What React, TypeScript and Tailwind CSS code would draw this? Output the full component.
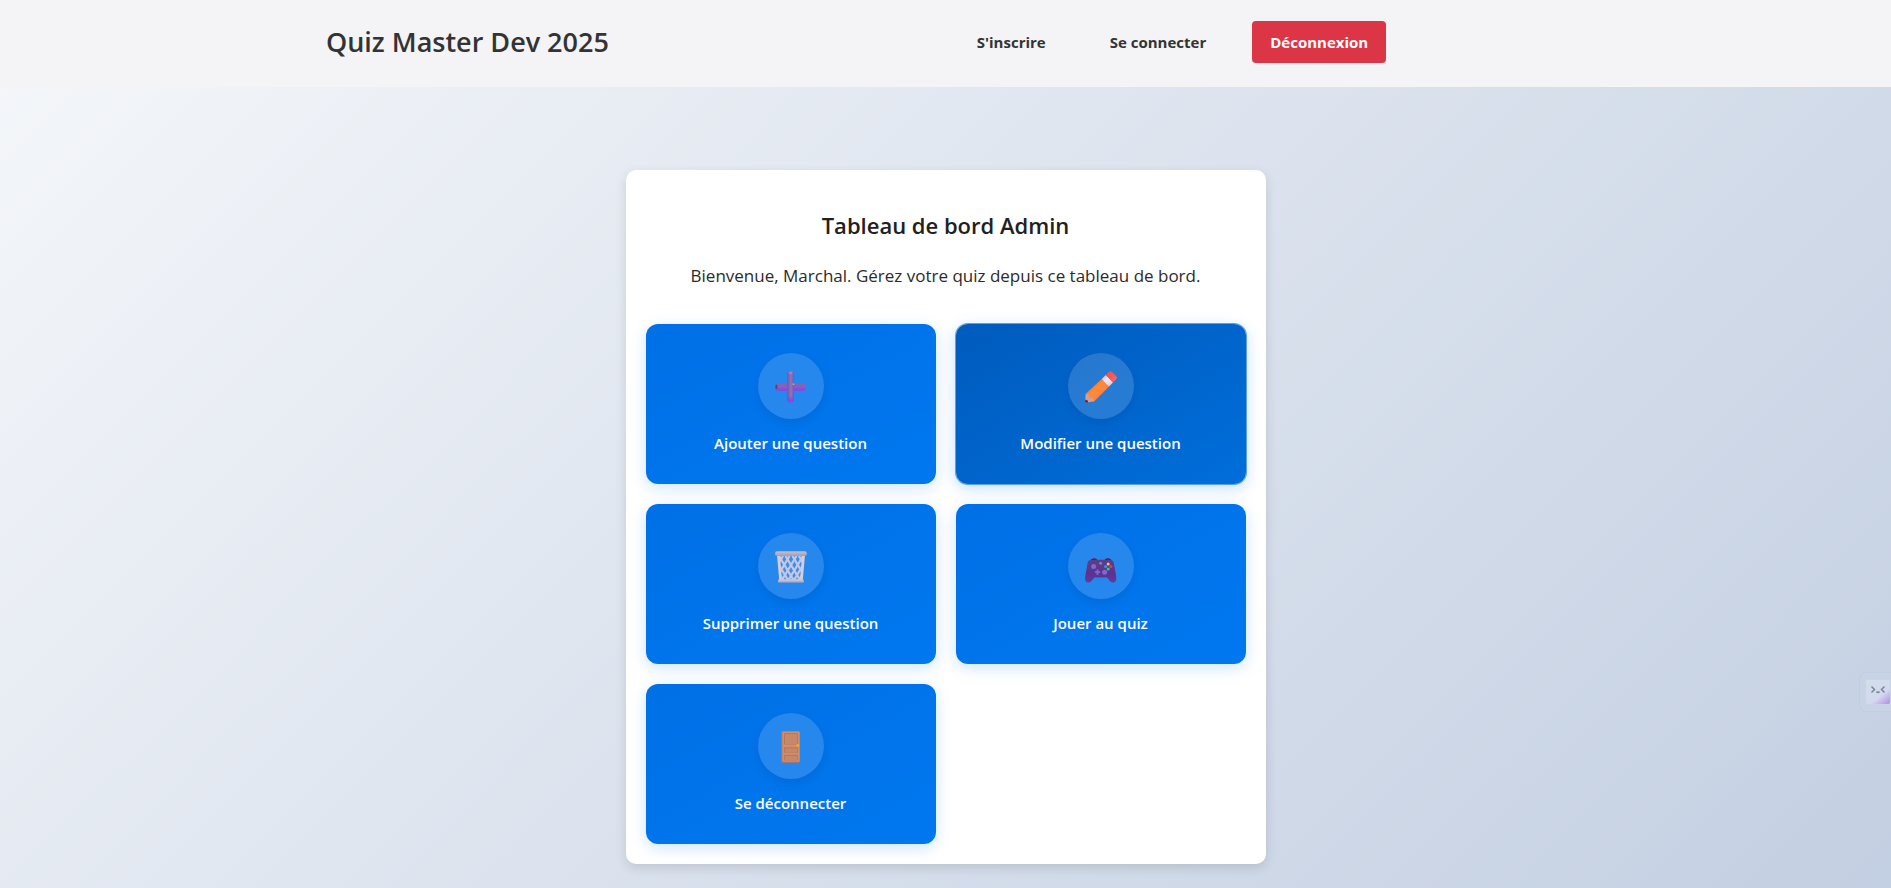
import type { ReactNode } from "react";

function PlusIcon() {
  return (
    <svg viewBox="0 0 32 32" className="size-8" aria-hidden="true">
      <defs>
        <linearGradient id="plus-h" x1="0" y1="0" x2="0" y2="1">
          <stop offset="0" stopColor="#7a6ba6" />
          <stop offset="0.45" stopColor="#8562bd" />
          <stop offset="1" stopColor="#8f3bf0" />
        </linearGradient>
        <linearGradient id="plus-v" x1="0" y1="0" x2="1" y2="0">
          <stop offset="0" stopColor="#6f57a8" />
          <stop offset="0.55" stopColor="#8d76bd" />
          <stop offset="1" stopColor="#7558ad" />
        </linearGradient>
        <linearGradient id="plus-tip" x1="0" y1="0" x2="0" y2="1">
          <stop offset="0.78" stopColor="#8f3bf0" stopOpacity="0" />
          <stop offset="1" stopColor="#8f3bf0" />
        </linearGradient>
      </defs>
      <rect x="0" y="12.2" width="31.2" height="7.6" rx="3.4" fill="url(#plus-h)" />
      <ellipse cx="1.4" cy="15.8" rx="1.1" ry="2.4" fill="#54447c" />
      <rect x="12.2" y="0" width="6.8" height="31.4" rx="3.2" fill="url(#plus-v)" />
      <rect x="12.2" y="0" width="6.8" height="31.4" rx="3.2" fill="url(#plus-tip)" />
      <circle cx="18.4" cy="13.2" r="0.9" fill="#b3a2dc" />
      <ellipse cx="15.6" cy="1.9" rx="2" ry="1" fill="#9d87cb" />
    </svg>
  );
}

function PencilIcon() {
  return (
    <svg viewBox="0 0 32 32" className="size-8" aria-hidden="true">
      <defs>
        <linearGradient id="pencil-body" x1="0.2" y1="0.2" x2="0.8" y2="0.8">
          <stop offset="0" stopColor="#f26a3c" />
          <stop offset="0.4" stopColor="#ff8a36" />
          <stop offset="0.7" stopColor="#fb8640" />
          <stop offset="1" stopColor="#f0603f" />
        </linearGradient>
        <linearGradient id="pencil-eraser" x1="0" y1="0" x2="1" y2="1">
          <stop offset="0" stopColor="#f8474c" />
          <stop offset="1" stopColor="#ff6a5c" />
        </linearGradient>
      </defs>
      <path d="M17 7.8 24.2 15.4 9.2 30.4 0.5 23Z" fill="url(#pencil-body)" />
      <path d="M0.6 22.9 0.1 30.6Q0.1 31.9 1.4 31.8L9.4 30.2 7.4 26.6 4.2 26.3 3.8 23.6Z" fill="#d3a08c" />
      <path d="M0.3 28.6 0.1 30.6Q0.1 31.9 1.4 31.8L3.4 31.4Q3 28.9 0.3 28.6Z" fill="#5b2744" />
      <path d="M20.8 4 28 11.6 24 15.6 16.8 8Z" fill="#dcd2ee" />
      <path d="M22.4 5.8 26.2 9.8 22.2 13.8 18.4 9.8Z" fill="#e9e1f7" />
      <path d="M20.8 4 24.2 0.7Q25.5 -0.3 26.8 0.7L31.3 5.2Q32.4 6.5 31.3 8.1L28 11.6Z" fill="url(#pencil-eraser)" />
    </svg>
  );
}

function BasketIcon() {
  return (
    <svg viewBox="0 0 32 32" className="size-8" aria-hidden="true">
      <defs>
        <linearGradient id="basket-rim" x1="0" y1="0" x2="0" y2="1">
          <stop offset="0" stopColor="#c9bfc9" />
          <stop offset="1" stopColor="#a99cab" />
        </linearGradient>
      </defs>
      <path d="M2.4 4H29.6L27.2 29H4.8Z" fill="#cfcbe0" fillOpacity="0.12" />
      <g fill="none" stroke="#c8c6e0" strokeWidth="2.3">
        <path d="M4 5 18.5 29M10.5 5 25 29M17.5 5 27 21M24 5 28.2 12M4.5 15 13 29M5 24 8 29" />
        <path d="M28 5 13.5 29M21.5 5 7 29M14.5 5 5 21M8 5 3.8 12M27.5 15 19 29M27 24 24 29" />
      </g>
      <path d="M2 4H4.8L7 29H4.2ZM30 4H27.2L25 29H27.8Z" fill="#d3cddc" />
      <rect x="0" y="0.2" width="31.8" height="4.8" rx="2" fill="url(#basket-rim)" />
      <rect x="3" y="28.2" width="25.8" height="3.4" rx="1.2" fill="#b7aebd" />
      <rect x="4" y="28.5" width="23.8" height="1" rx="0.5" fill="#d8d2e2" />
    </svg>
  );
}

function GamepadIcon() {
  return (
    <svg viewBox="0 0 32 32" className="size-8" aria-hidden="true">
      <defs>
        <linearGradient id="pad-body" x1="0" y1="0" x2="0" y2="1">
          <stop offset="0" stopColor="#5a3f8a" />
          <stop offset="0.6" stopColor="#5b3291" />
          <stop offset="1" stopColor="#613a9c" />
        </linearGradient>
      </defs>
      <path d="M5 10Q6 7.4 9 7.3Q12 7.3 12.6 9.4ZM27 10Q26 7.4 23 7.3Q20 7.3 19.4 9.4Z" fill="#43204f" />
      <path
        d="M6.6 8.8H24.6Q28 8.8 28.8 12L31.2 25.5Q31.9 31 28.4 31.5Q26 31.9 24.2 29.2L22 26.6H9.4L7.2 29.2Q5.4 31.9 3 31.5Q-0.5 31 0.2 25.5L2.6 12Q3.4 8.8 6.6 8.8Z"
        fill="url(#pad-body)"
      />
      <circle cx="8.6" cy="15.6" r="2.5" fill="#7f68c9" />
      <circle cx="19.6" cy="21.2" r="2.5" fill="#8069cb" />
      <path d="M11.6 18.5h1.8v1.8h1.8v1.8h-1.8v1.8h-1.8v-1.8H9.8v-1.8h1.8Z" fill="#8069cb" />
      <circle cx="15.6" cy="12.2" r="1.5" fill="#8f7f9c" />
      <circle cx="23.2" cy="13" r="1.5" fill="#ffc34a" />
      <circle cx="20.6" cy="15.5" r="1.5" fill="#2a9ae8" />
      <circle cx="25.9" cy="15.5" r="1.5" fill="#f5305c" />
      <circle cx="23.2" cy="18.1" r="1.5" fill="#2fd175" />
    </svg>
  );
}

function DoorIcon() {
  return (
    <svg viewBox="0 0 32 32" className="size-8" aria-hidden="true">
      <rect x="6.2" y="0.2" width="18.8" height="31.6" rx="1.2" fill="#bd7058" />
      <rect x="7.4" y="0.6" width="17.2" height="30.2" rx="1" fill="#d48e66" />
      <g fill="#b87860">
        <rect x="9" y="2" width="14" height="11.4" rx="1" />
        <rect x="9" y="16.2" width="14" height="5.8" rx="1" />
        <rect x="9" y="23.8" width="14" height="5.8" rx="1" />
      </g>
      <g fill="#c6886a">
        <rect x="10" y="3" width="12.2" height="10" rx="0.8" />
        <rect x="10" y="17.4" width="12.2" height="4.2" rx="0.8" />
        <rect x="10" y="25" width="12.2" height="4.2" rx="0.8" />
      </g>
      <circle cx="22.8" cy="14.3" r="1.4" fill="#ffa51f" />
    </svg>
  );
}

type Action = { label: string; icon: ReactNode; active?: boolean };

const actions: Action[] = [
  { label: "Ajouter une question", icon: <PlusIcon /> },
  { label: "Modifier une question", icon: <PencilIcon />, active: true },
  { label: "Supprimer une question", icon: <BasketIcon /> },
  { label: "Jouer au quiz", icon: <GamepadIcon /> },
  { label: "Se déconnecter", icon: <DoorIcon /> },
];

const tileBase =
  "flex h-40 flex-col items-center justify-center gap-3 rounded-xl text-[15px] leading-6 font-semibold text-white";
const tileIdle =
  "bg-linear-to-br from-[#0070e6] to-[#0078f0] shadow-[0_4px_15px_rgba(0,123,255,0.2)]";
const tileActive =
  "bg-linear-to-br from-[#005bbd] to-[#006edb] ring-1 ring-[#5ba0e8] shadow-[0_4px_15px_rgba(0,123,255,0.25)]";

function ActionTile({ label, icon, active }: Action) {
  return (
    <button type="button" className={`${tileBase} ${active ? tileActive : tileIdle}`}>
      <span className="flex size-[66px] items-center justify-center rounded-full bg-white/15 pt-0.5 shadow-[0_4px_8px_rgba(0,0,0,0.08)]">
        {icon}
      </span>
      <span>{label}</span>
    </button>
  );
}

function AssistantBadge() {
  return (
    <button
      type="button"
      aria-label="Assistant"
      className="absolute right-0 top-[672px] flex h-10 items-center rounded-l-lg border border-r-0 border-[#c1cde0] bg-[#c8d4e6] pl-1.5 pr-px"
    >
      <svg viewBox="0 0 24 24" className="size-6" aria-hidden="true">
        <defs>
          <linearGradient id="badge-bg" x1="0.2" y1="0" x2="1" y2="1">
            <stop offset="0" stopColor="#d2deeb" />
            <stop offset="0.6" stopColor="#d3d9ee" />
            <stop offset="1" stopColor="#b08ce8" />
          </linearGradient>
        </defs>
        <rect width="24" height="24" rx="2" fill="url(#badge-bg)" />
        <g fill="none" stroke="#7d8696" strokeWidth="1.5">
          <path d="M5.5 6.5 8.5 9.5 5.5 12.5M18.5 6.5 15.5 9.5 18.5 12.5" />
          <path d="M10.5 11.5Q12 13.5 13.5 11.5" />
        </g>
      </svg>
    </button>
  );
}

export default function App() {
  return (
    <div className="relative flex min-h-screen flex-col bg-[linear-gradient(135deg,#f5f7fa_0%,#c3cfe2_100%)] font-['Open_Sans','Noto_Sans',sans-serif]">
      <header className="flex h-[87px] items-center justify-evenly bg-[#f4f4f7] pb-1 text-[#333333]">
        <h1 className="pt-0.5 text-[27px] font-semibold">Quiz Master Dev 2025</h1>
        <nav className="w-1/3 pl-6">
          <ul className="flex items-center gap-7 text-[15px] font-bold">
            <li>
              <a href="#inscription" className="block px-[18px] pb-2 pt-[10px]">S'inscrire</a>
            </li>
            <li>
              <a href="#connexion" className="block px-[18px] pb-2 pt-[10px]">Se connecter</a>
            </li>
            <li>
              <button type="button" className="h-[42px] rounded bg-[#dc3545] px-[18px] pt-px text-white">
                Déconnexion
              </button>
            </li>
          </ul>
        </nav>
      </header>
      <main className="flex justify-center px-4 pb-6 pt-[83px]">
        <section className="w-full max-w-[640px] rounded-[10px] bg-white p-5 pt-10 shadow-[0_4px_12px_rgba(0,0,0,0.12)]">
          <h2 className="text-center text-[22px] leading-[30px] font-semibold text-[#212121]">Tableau de bord Admin</h2>
          <p className="mt-6 text-center text-[17px] leading-6 text-[#2b2b2b]">
            Bienvenue, Marchal. Gérez votre quiz depuis ce tableau de bord.
          </p>
          <div className="mt-9 grid grid-cols-2 gap-5">
            {actions.map((action) => (
              <ActionTile key={action.label} {...action} />
            ))}
          </div>
        </section>
      </main>
      <AssistantBadge />
    </div>
  );
}
